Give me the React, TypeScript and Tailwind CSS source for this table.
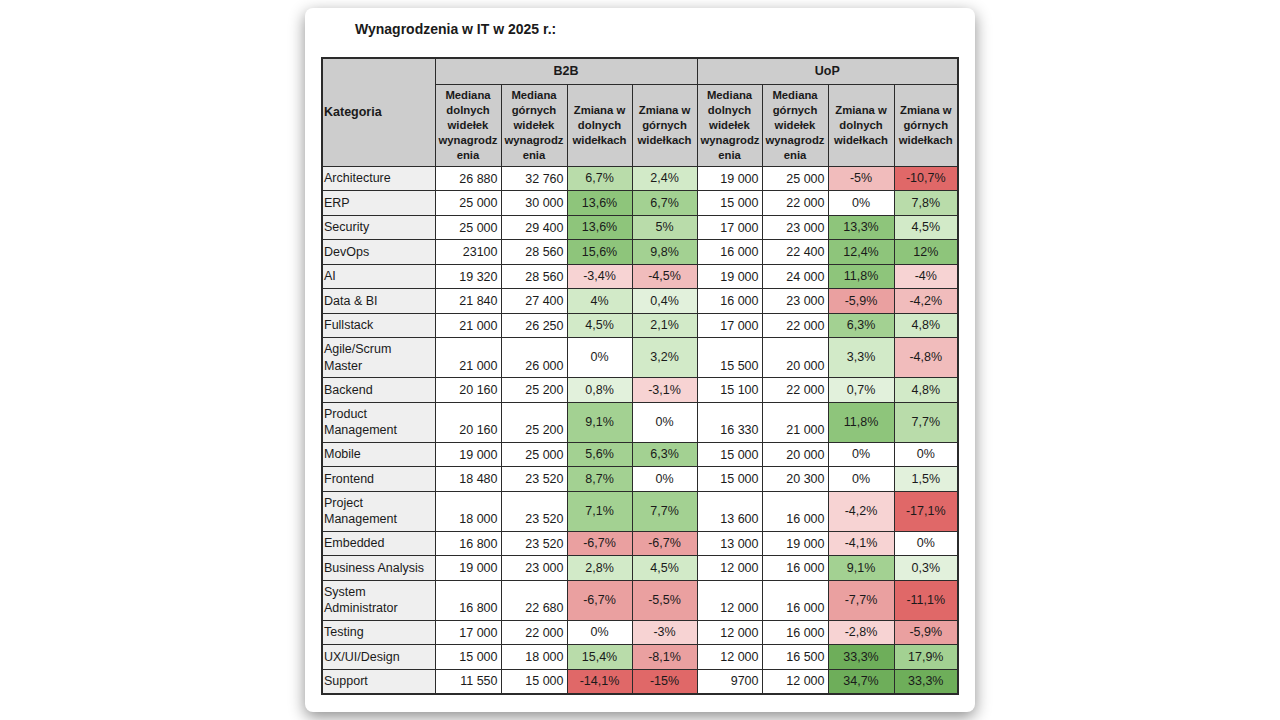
const bg: Record<string, string> = {
  w: 'bg-white',
  g1: 'bg-[#e2f1dc]',
  g2: 'bg-[#d2eac8]',
  g3: 'bg-[#b9dcaa]',
  g4: 'bg-[#a3d192]',
  g5: 'bg-[#8ec57b]',
  g6: 'bg-[#6eae5a]',
  r1: 'bg-[#f7d3d3]',
  r2: 'bg-[#f1bcbc]',
  r3: 'bg-[#eaa0a0]',
  r4: 'bg-[#e06868]',
}

// [kategoria, b2b dol, b2b gor, zmiana dol, kolor, zmiana gor, kolor, uop dol, uop gor, zmiana dol, kolor, zmiana gor, kolor]
type Row = [string, string, string, string, string, string, string, string, string, string, string, string, string]

const rows: Row[] = [
  ['Architecture', '26 880', '32 760', '6,7%', 'g3', '2,4%', 'g2', '19 000', '25 000', '-5%', 'r2', '-10,7%', 'r4'],
  ['ERP', '25 000', '30 000', '13,6%', 'g5', '6,7%', 'g4', '15 000', '22 000', '0%', 'w', '7,8%', 'g3'],
  ['Security', '25 000', '29 400', '13,6%', 'g5', '5%', 'g3', '17 000', '23 000', '13,3%', 'g5', '4,5%', 'g2'],
  ['DevOps', '23100', '28 560', '15,6%', 'g5', '9,8%', 'g4', '16 000', '22 400', '12,4%', 'g5', '12%', 'g5'],
  ['AI', '19 320', '28 560', '-3,4%', 'r1', '-4,5%', 'r2', '19 000', '24 000', '11,8%', 'g5', '-4%', 'r1'],
  ['Data & BI', '21 840', '27 400', '4%', 'g2', '0,4%', 'g1', '16 000', '23 000', '-5,9%', 'r3', '-4,2%', 'r2'],
  ['Fullstack', '21 000', '26 250', '4,5%', 'g2', '2,1%', 'g2', '17 000', '22 000', '6,3%', 'g4', '4,8%', 'g2'],
  ['Agile/Scrum Master', '21 000', '26 000', '0%', 'w', '3,2%', 'g2', '15 500', '20 000', '3,3%', 'g2', '-4,8%', 'r2'],
  ['Backend', '20 160', '25 200', '0,8%', 'g1', '-3,1%', 'r1', '15 100', '22 000', '0,7%', 'g1', '4,8%', 'g2'],
  ['Product Management', '20 160', '25 200', '9,1%', 'g4', '0%', 'w', '16 330', '21 000', '11,8%', 'g5', '7,7%', 'g3'],
  ['Mobile', '19 000', '25 000', '5,6%', 'g4', '6,3%', 'g4', '15 000', '20 000', '0%', 'w', '0%', 'w'],
  ['Frontend', '18 480', '23 520', '8,7%', 'g4', '0%', 'w', '15 000', '20 300', '0%', 'w', '1,5%', 'g1'],
  ['Project Management', '18 000', '23 520', '7,1%', 'g4', '7,7%', 'g4', '13 600', '16 000', '-4,2%', 'r1', '-17,1%', 'r4'],
  ['Embedded', '16 800', '23 520', '-6,7%', 'r3', '-6,7%', 'r3', '13 000', '19 000', '-4,1%', 'r1', '0%', 'w'],
  ['Business Analysis', '19 000', '23 000', '2,8%', 'g2', '4,5%', 'g2', '12 000', '16 000', '9,1%', 'g4', '0,3%', 'g1'],
  ['System Administrator', '16 800', '22 680', '-6,7%', 'r3', '-5,5%', 'r3', '12 000', '16 000', '-7,7%', 'r3', '-11,1%', 'r4'],
  ['Testing', '17 000', '22 000', '0%', 'w', '-3%', 'r1', '12 000', '16 000', '-2,8%', 'r1', '-5,9%', 'r3'],
  ['UX/UI/Design', '15 000', '18 000', '15,4%', 'g3', '-8,1%', 'r3', '12 000', '16 500', '33,3%', 'g6', '17,9%', 'g4'],
  ['Support', '11 550', '15 000', '-14,1%', 'r4', '-15%', 'r4', '9700', '12 000', '34,7%', 'g6', '33,3%', 'g6'],
]

const tall = ['Agile/Scrum Master', 'Product Management', 'Project Management', 'System Administrator']

const cell = 'border border-[#2b2b2b] px-[3px]'
const head = `${cell} bg-[#cdcdcd] text-center align-middle text-[11.3px] leading-[15px] font-bold`

function SubHeaders() {
  return (
    <>
      <th className={head}>Mediana<br />dolnych<br />widełek<br />wynagrodz<br />enia</th>
      <th className={head}>Mediana<br />górnych<br />widełek<br />wynagrodz<br />enia</th>
      <th className={head}>Zmiana w<br />dolnych<br />widełkach</th>
      <th className={head}>Zmiana w<br />górnych<br />widełkach</th>
    </>
  )
}

function Num({ v }: { v: string }) {
  return <td className={`${cell} bg-white text-right align-bottom pb-[3px]`}>{v}</td>
}

function Pct({ v, c }: { v: string; c: string }) {
  return <td className={`${cell} ${bg[c]} text-center align-middle`}>{v}</td>
}

export default function App() {
  return (
    <div className="min-h-screen bg-white flex justify-center font-['Liberation_Sans',Arial,sans-serif] text-[#1a1a1a]">
      <div className="mt-2 w-[670px] h-[704px] rounded-lg bg-white shadow-[0_5px_16px_rgba(0,0,0,0.45)] pt-[13px] px-4">
        <h1 className="pl-[34px] text-[14px] leading-4 font-bold">Wynagrodzenia w IT w 2025 r.:</h1>
        <table className="mt-[20px] w-[636px] table-fixed border-collapse border-2 border-[#2b2b2b] text-[12.5px] leading-[16.5px]">
          <colgroup>
            <col className="w-[113px]" />
            <col className="w-[66px]" />
            <col className="w-[66px]" />
            <col className="w-[65px]" />
            <col className="w-[65px]" />
            <col className="w-[65px]" />
            <col className="w-[66px]" />
            <col className="w-[66px]" />
            <col className="w-[64px]" />
          </colgroup>
          <thead>
            <tr className="h-[26px]">
              <th rowSpan={2} className={`${cell} pl-[1px] bg-[#cdcdcd] text-left align-middle text-[12.5px] font-bold`}>Kategoria</th>
              <th colSpan={4} className={`${head} text-[12.5px]`}>B2B</th>
              <th colSpan={4} className={`${head} text-[12.5px]`}>UoP</th>
            </tr>
            <tr className="h-[82px]">
              <SubHeaders />
              <SubHeaders />
            </tr>
          </thead>
          <tbody>
            {rows.map((r) => (
              <tr key={r[0]} className={tall.includes(r[0]) ? 'h-[40px]' : 'h-[24.5px]'}>
                <td className={`${cell} pl-[1px] bg-[#efefef] text-left align-middle`}>{r[0]}</td>
                <Num v={r[1]} />
                <Num v={r[2]} />
                <Pct v={r[3]} c={r[4]} />
                <Pct v={r[5]} c={r[6]} />
                <Num v={r[7]} />
                <Num v={r[8]} />
                <Pct v={r[9]} c={r[10]} />
                <Pct v={r[11]} c={r[12]} />
              </tr>
            ))}
          </tbody>
        </table>
      </div>
    </div>
  )
}
